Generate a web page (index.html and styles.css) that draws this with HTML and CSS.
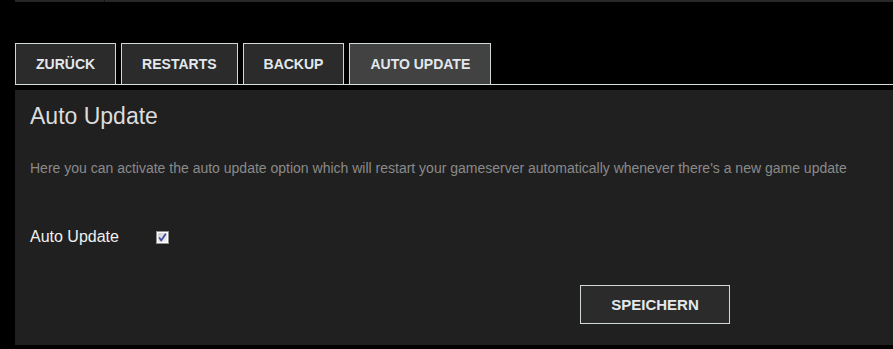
FILE: index.html
```html
<!DOCTYPE html>
<html lang="de">
<head>
<meta charset="utf-8">
<title>Auto Update</title>
<link rel="stylesheet" href="styles.css">
</head>
<body>
<div class="topbar"><span class="seg"></span><span class="seg seg-rest"></span></div>
<nav class="tabs">
  <a class="tab" href="#">Zurück</a>
  <a class="tab" href="#">Restarts</a>
  <a class="tab" href="#">Backup</a>
  <a class="tab active" href="#">Auto Update</a>
</nav>
<section class="panel">
  <h1 class="title">Auto Update</h1>
  <p class="desc">Here you can activate the auto update option which will restart your gameserver automatically whenever there's a new game update</p>
  <div class="field">
    <label class="field-label" for="au">Auto Update</label>
    <span class="check" id="au" role="checkbox" aria-checked="true">
      <svg width="13" height="13" viewBox="0 0 13 13">
        <defs>
          <linearGradient id="g" x1="0" y1="0" x2="1" y2="1">
            <stop offset="0" stop-color="#cfcfd4"/>
            <stop offset="1" stop-color="#f4f4f6"/>
          </linearGradient>
        </defs>
        <rect x="0.5" y="0.5" width="12" height="12" fill="#fff" stroke="#8e8f8f"/>
        <rect x="2" y="2" width="9" height="9" fill="url(#g)"/>
        <path d="M3.2 6.4 L5.2 9.6 L9.8 2.8" fill="none" stroke="#3b4a9e" stroke-width="1.7" stroke-linejoin="round"/>
      </svg>
    </span>
  </div>
  <div class="actions">
    <button class="btn" type="button">Speichern</button>
  </div>
</section>
</body>
</html>
```
FILE: styles.css
```css
html, body {
  margin: 0;
  padding: 0;
  background: #000;
  font-family: "Liberation Sans", Arial, sans-serif;
}

.topbar {
  display: flex;
  height: 2px;
  margin-left: 15px;
}
.seg {
  width: 89px;
  background: #262626;
  border-right: 1px solid #141414;
}
.seg-rest {
  flex: 1;
  border-right: none;
  background: #282828;
}

.tabs {
  display: flex;
  gap: 5px;
  margin: 41px 0 0 15px;
  border-bottom: 1px solid #d8e0e0;
}
.tab {
  display: block;
  height: 40px;
  line-height: 40px;
  padding: 0 20px;
  border: 1px solid #d0d8d8;
  border-bottom: none;
  background: #2b2b2b;
  color: #e2e8ec;
  font-weight: bold;
  font-size: 14px;
  text-transform: uppercase;
  text-decoration: none;
}
.tab.active {
  background: #424242;
}

.panel {
  margin: 5px 0 0 15px;
  height: 255px;
  padding: 0 15px;
  background: #202020;
  box-sizing: border-box;
}

.title {
  margin: 0;
  padding-top: 14px;
  font-size: 23px;
  line-height: 25px;
  font-weight: normal;
  color: #dcdcdc;
}

.desc {
  margin: 31px 0 0;
  font-size: 14px;
  line-height: 16px;
  color: #8a8a8a;
}

.field {
  display: flex;
  align-items: center;
  height: 18px;
  margin-top: 52px;
}
.field-label {
  width: 126px;
  font-size: 16px;
  line-height: 18px;
  color: #f0f0f0;
}
.check {
  display: block;
  width: 13px;
  height: 13px;
  margin-top: 1px;
}
.check svg {
  display: block;
}

.actions {
  display: flex;
  margin-top: 39px;
  padding-left: 550px;
}
.btn {
  width: 150px;
  height: 39px;
  border: 1px solid #d0d8d8;
  background: #2b2b2b;
  color: #e2e8ec;
  font-family: "Liberation Sans", Arial, sans-serif;
  font-weight: bold;
  font-size: 15px;
  text-transform: uppercase;
  padding: 0;
  cursor: pointer;
}
```
